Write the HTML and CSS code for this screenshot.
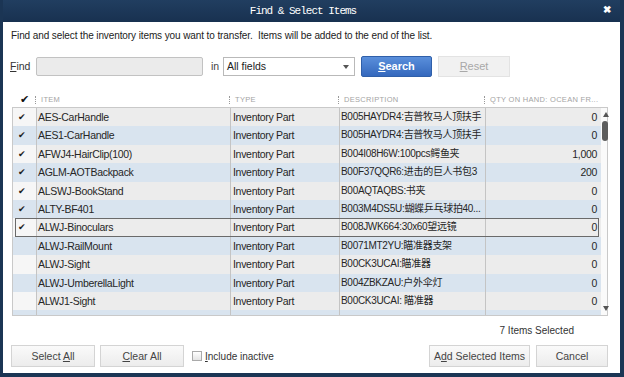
FILE: index.html
```html
<!DOCTYPE html>
<html>
<head>
	<meta charset="utf-8"/>
	<title>Find &amp; Select Items</title>
	<link rel="stylesheet" href="styles.css">
</head>
<body>
<div class="dialog">
	<div class="titlebar">
		<span class="title">Find &amp; Select Items</span>
		<span class="close">&#x2716;</span>
	</div>
	<div class="content">
		<p class="intro">Find and select the inventory items you want to transfer.&nbsp; Items will be added to the end of the list.</p>

		<div class="find-row">
			<label class="find-label"><u>F</u>ind</label>
			<span class="find-input"></span>
			<span class="in-label">in</span>
			<span class="select">All fields<span class="arrow"></span></span>
			<span class="btn btn-blue"><span><u>S</u>earch</span></span>
			<span class="btn btn-off"><span><u>R</u>eset</span></span>
		</div>

		<div class="grid-head">
			<span class="hcheck">&#x2714;</span>
			<span class="hcol">ITEM</span>
			<span class="hcol">TYPE</span>
			<span class="hcol">DESCRIPTION</span>
			<span class="hcol">QTY ON HAND: OCEAN FR...</span>
		</div>

		<div class="grid">
			<div class="rows">
				<div class="row"><span class="c chk on"></span><span class="c">AES-CarHandle</span><span class="c">Inventory Part</span><span class="c desc">B005HAYDR4:吉普牧马人顶扶手</span><span class="c num">0</span></div>
				<div class="row"><span class="c chk on"></span><span class="c">AES1-CarHandle</span><span class="c">Inventory Part</span><span class="c desc">B005HAYDR4:吉普牧马人顶扶手</span><span class="c num">0</span></div>
				<div class="row"><span class="c chk on"></span><span class="c">AFWJ4-HairClip(100)</span><span class="c">Inventory Part</span><span class="c desc">B004I08H6W:100pcs鳄鱼夹</span><span class="c num">1,000</span></div>
				<div class="row"><span class="c chk on"></span><span class="c">AGLM-AOTBackpack</span><span class="c">Inventory Part</span><span class="c desc">B00F37QQR6:进击的巨人书包3</span><span class="c num">200</span></div>
				<div class="row"><span class="c chk on"></span><span class="c">ALSWJ-BookStand</span><span class="c">Inventory Part</span><span class="c desc">B00AQTAQBS:书夹</span><span class="c num">0</span></div>
				<div class="row"><span class="c chk on"></span><span class="c">ALTY-BF401</span><span class="c">Inventory Part</span><span class="c desc">B003M4DS5U:蝴蝶乒乓球拍40...</span><span class="c num">0</span></div>
				<div class="row focus"><span class="c chk on"></span><span class="c">ALWJ-Binoculars</span><span class="c">Inventory Part</span><span class="c desc">B008JWK664:30x60望远镜</span><span class="c num">0</span></div>
				<div class="row"><span class="c chk"></span><span class="c">ALWJ-RailMount</span><span class="c">Inventory Part</span><span class="c desc">B0071MT2YU:瞄准器支架</span><span class="c num">0</span></div>
				<div class="row"><span class="c chk"></span><span class="c">ALWJ-Sight</span><span class="c">Inventory Part</span><span class="c desc">B00CK3UCAI:瞄准器</span><span class="c num">0</span></div>
				<div class="row"><span class="c chk"></span><span class="c">ALWJ-UmberellaLight</span><span class="c">Inventory Part</span><span class="c desc">B004ZBKZAU:户外伞灯</span><span class="c num">0</span></div>
				<div class="row"><span class="c chk"></span><span class="c">ALWJ1-Sight</span><span class="c">Inventory Part</span><span class="c desc">B00CK3UCAI: 瞄准器</span><span class="c num">0</span></div>
				<div class="row"><span class="c chk"></span><span class="c"></span><span class="c"></span><span class="c"></span><span class="c num"></span></div>
			</div>
			<div class="scrollbar">
				<span class="sb-up"></span>
				<span class="sb-thumb"></span>
				<span class="sb-down"></span>
			</div>
		</div>

		<div class="status">7 Items Selected</div>

		<div class="actions">
			<span class="btn btn-gray w84"><span>Select <u>A</u>ll</span></span>
			<span class="btn btn-gray w84"><span><u>C</u>lear All</span></span>
			<label class="inactive"><span class="box"></span><span><u>I</u>nclude inactive</span></label>
			<span class="spacer"></span>
			<span class="btn btn-gray w100"><span>A<u>d</u>d Selected Items</span></span>
			<span class="btn btn-gray w72"><span>Cancel</span></span>
		</div>
	</div>
</div>
</body>
</html>
```

FILE: styles.css
```css
/* =====reset===== */
body, div, span, p, label { padding: 0; margin: 0; }
body { width: 624px; height: 377px; overflow: hidden; font-family: "Liberation Sans", "Noto Sans CJK SC", sans-serif; font-size: 11px; color: #2b2b2b; }
u { text-decoration: underline; }

/* =====window===== */
.dialog { width: 624px; height: 377px; box-sizing: border-box; display: flex; flex-direction: column; background: #1b3554; padding: 0 4px 4px 3px; }
.titlebar { height: 22px; display: flex; align-items: center; justify-content: center; position: relative; background: linear-gradient(#213e60, #183150); }
.title { font-family: "Liberation Mono", monospace; font-size: 11px; letter-spacing: -1px; color: #fff; margin-right: 17px; }
.close { position: absolute; right: 9px; top: 4px; color: #fff; font-size: 10px; font-weight: bold; }

.content { flex: 1; background: #fff; display: flex; flex-direction: column; padding: 7px 12px 6px 7px; }
.intro { height: 14px; line-height: 14px; color: #222; font-size: 10px; letter-spacing: -0.1px; padding-left: 1px; }

/* =====find row===== */
.find-row { display: flex; align-items: center; height: 20px; margin-top: 13px; }
.find-label { width: 26px; color: #333; font-size: 10.5px; }
.find-input { width: 165px; height: 17px; background: #ebebeb; border: 1px solid #c2c2c2; border-radius: 2px; }
.in-label { margin-left: 8px; width: 11px; color: #444; font-size: 10.5px; }
.select { position: relative; width: 127px; height: 17px; line-height: 17px; margin-left: 1px; padding-left: 3px; border: 1px solid #b9b9b9; background: #fff; color: #222; font-size: 10.5px; }
.arrow { position: absolute; right: 5px; top: 7px; border-left: 3px solid transparent; border-right: 3px solid transparent; border-top: 4px solid #555; }

.btn { display: flex; align-items: center; justify-content: center; box-sizing: border-box; height: 21px; font-weight: bold; }
.btn-blue { width: 71px; margin-left: 6px; height: 21px; color: #fff; background: linear-gradient(#5a8fdb, #3468bd); border: 1px solid #2f5fa9; border-radius: 2px; }
.btn-off { width: 72px; margin-left: 6px; color: #a8a8a8; background: #f1f1f1; border: 1px solid #e3e3e3; font-weight: normal; }

/* =====grid===== */
.grid-head { display: grid; grid-template-columns: 23px 194px 109px 146px 116px; height: 15px; margin-top: 16px; margin-left: 2px; align-items: center; }
.hcheck { font-size: 11px; color: #111; text-align: center; padding-left: 1px; }
.hcol { font-size: 7.5px; color: #a4a4a4; letter-spacing: 0.3px; padding-left: 5px; border-left: 1px dotted #999; line-height: 8px; }

.grid { display: flex; height: 209px; margin-left: 2px; box-sizing: border-box; border: 1px solid #c9c9c9; background: #fff; }
.rows { width: 588px; overflow: hidden; }
.row { display: grid; grid-template-columns: 23px 194px 109px 146px 116px; height: 18.4px; line-height: 18.4px; background: #ececec; position: relative; }
.row:nth-child(even) { background: #d9e4ef; }
.c { border-left: 1px solid #c4c4c4; padding-left: 2px; white-space: nowrap; overflow: hidden; font-size: 10.5px; letter-spacing: -0.3px; color: #262626; }
.c:nth-child(2) { padding-left: 1px; }
.desc { font-size: 10px; padding-left: 1px; }
.chk { border-left: none; background: #f6f6f6; }
.row:nth-child(even) .chk { background: #d9e4ef; }
.chk.on::after { content: "\2714"; font-size: 8.5px; color: #1e1e1e; display: block; text-align: center; padding-right: 8px; }
.num { text-align: right; padding-right: 4px; }
.focus::after { content: ""; position: absolute; left: 2px; right: 2px; top: 0; bottom: 0; border: 1px solid #6a6a6a; }

.scrollbar { flex: 1; position: relative; background: #fafafa; }
.sb-up { position: absolute; left: 2px; top: 4px; border-left: 3px solid transparent; border-right: 3px solid transparent; border-bottom: 5px solid #555; }
.sb-thumb { position: absolute; left: 1px; top: 13px; width: 6px; height: 20px; border-radius: 3px; background: #5d5d5d; }
.sb-down { position: absolute; left: 2px; bottom: 4px; border-left: 3px solid transparent; border-right: 3px solid transparent; border-top: 5px solid #555; }

/* =====bottom===== */
.status { height: 14px; line-height: 14px; margin-top: 8px; text-align: right; padding-right: 34px; color: #333; font-size: 10px; }
.actions { display: flex; align-items: center; height: 22px; margin-top: 7px; padding-left: 1px; }
.btn-gray { height: 22px; color: #444; background: linear-gradient(#fafafa, #ececec); border: 1px solid #d4d4d4; font-weight: normal; font-size: 10.5px; }
.w84 { width: 84px; margin-right: 5px; }
.w100 { width: 101px; margin-right: 6px; }
.w72 { width: 72px; }
.inactive { display: flex; align-items: center; margin-left: 3px; color: #333; font-size: 10px; }
.box { width: 8px; height: 8px; border: 1px solid #aaa; background: linear-gradient(#fff, #e4e4e4); margin-right: 3px; }
.spacer { flex: 1; }
```
